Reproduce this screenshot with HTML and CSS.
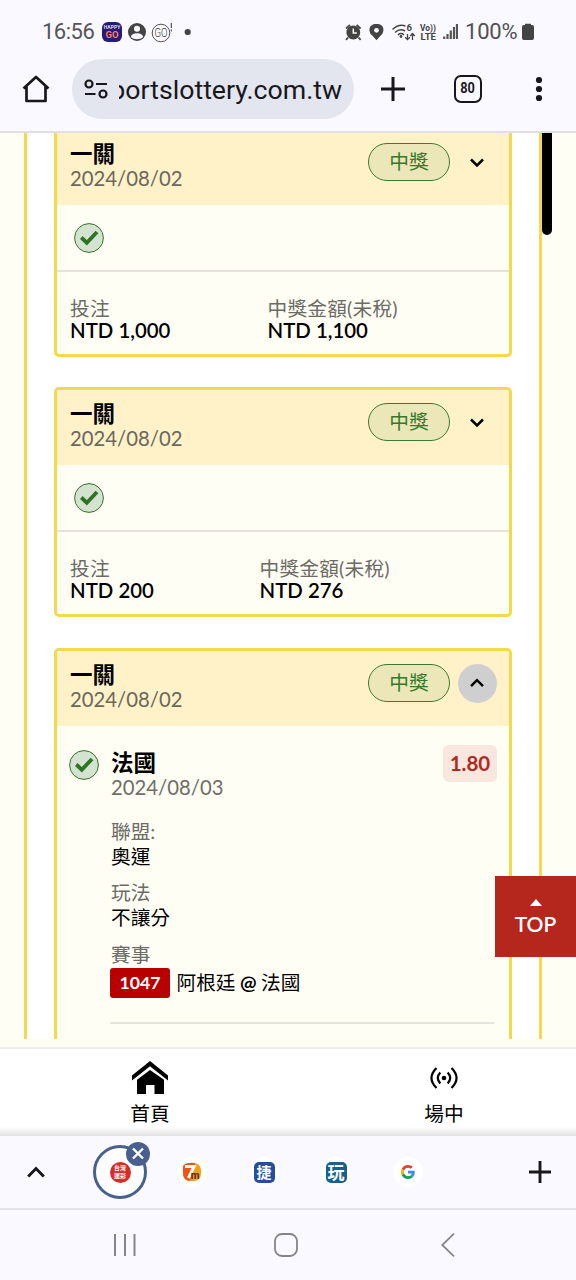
FILE: index.html
```html
<!DOCTYPE html>
<html lang="zh-Hant">
<head>
<meta charset="utf-8">
<title>投注紀錄</title>
<link rel="stylesheet" href="styles.css">
</head>
<body>
<svg class="defs" width="0" height="0">
  <symbol id="check" viewBox="0 0 30 30"><circle cx="15" cy="15" r="14.4" fill="#d4e3cf" stroke="#33722c" stroke-width="1"/><path d="M7.3 14.500l5.500 5.200 10.200-10.700" fill="none" stroke="#2f7424" stroke-width="3.800"/></symbol>
  <symbol id="down" viewBox="0 0 14 10"><path d="M1 1.500l6 6 6-6" fill="none" stroke="#000" stroke-width="2.500"/></symbol>
  <symbol id="up" viewBox="0 0 14 10"><path d="M1 8.200l6-6 6 6" fill="none" stroke="#000" stroke-width="2.500"/></symbol>
</svg>
<div class="phone">
  <header class="status">
    <span class="clock">16:56</span>
    <svg class="status-left" width="92" height="24" viewBox="0 0 92 24">
      <rect x="0" y="2" width="20" height="20" rx="6" fill="#2a1a78"/>
      <text x="10" y="8.600" class="happy">HAPPY</text><text x="10" y="18.200" class="go">GO</text>
      <circle cx="35" cy="12" r="9" fill="#444"/><circle cx="35" cy="8.800" r="3" fill="#fafaff"/><path d="M29 17c0-5 12-5 12 0-2 3-10 3-12 0z" fill="#fafaff"/>
      <circle cx="59" cy="13" r="8.800" fill="none" stroke="#555" stroke-width="1"/><text x="59" y="17.300" class="go-line" textLength="13" lengthAdjust="spacingAndGlyphs">GO</text>
      <path d="M69.300 3v5m0 1.500v2" stroke="#444" stroke-width="1.100"/>
      <circle cx="85.700" cy="12" r="3.100" fill="#444"/>
    </svg>
    <svg class="status-right" width="114" height="24" viewBox="344 20 114 24">
      <g fill="none" stroke="#444" stroke-width="1.800"><circle cx="353.300" cy="32.500" r="6" fill="#444"/><path d="M346 28.500l4-3.500M356.600 25l4 3.500M348 37.500l-2 2.300M358.600 37.500l2 2.300"/></g>
      <path d="M353.300 28.500v4.500h3.500" fill="none" stroke="#fafaff" stroke-width="1.500"/>
      <path d="M376.500 24c-8.800 0-8.200 8.500-4.200 11.600l4.200 4.600 4.200-4.600c4-3.100 4.600-11.600-4.200-11.600z" fill="#444"/><circle cx="376.500" cy="30.300" r="2.400" fill="#fafaff"/>
      <g fill="none" stroke="#444" stroke-width="1.500"><path d="M392.500 29.500q6.500-6 13-3.500M395 32.500q5-4.500 10-1.500M398 34.800q3-2.500 6 0"/><path d="M407.500 34v5.500m-2.300-2.200l2.300 2.300 2.300-2.300M412.500 40v-6.500m-2.300 2.500l2.300-2.500 2.300 2.500" stroke-width="1.300"/></g>
      <circle cx="401" cy="36.500" r="1.400" fill="#444"/><text x="406.500" y="31" class="tiny">6</text>
      <text x="420" y="31" class="tiny" textLength="16" lengthAdjust="spacingAndGlyphs">Vo))</text><text x="420.500" y="40.300" class="tiny" textLength="15.500" lengthAdjust="spacingAndGlyphs">LTE</text>
      <path d="M444.200 39v-2.500M447.500 39v-5M450.800 39v-8.500M454 39v-12M457 39V24" stroke="#555" stroke-width="2.200"/>
    </svg>
    <span class="percent">100%</span>
    <svg width="12" height="18" viewBox="0 0 12 18"><path d="M3 2V.8h6V2h1.500Q12 2 12 4v11q0 2-2 2H2q-2 0-2-2V4q0-2 1.500-2z" fill="#444"/></svg>
  </header>
  <div class="toolbar">
    <svg class="home" width="28" height="28" viewBox="0 0 28 28"><path d="M1.500 13.500L14 2l12.500 11.500M4.500 11.500V26h19V11.500" fill="none" stroke="#17171c" stroke-width="2.700" stroke-linejoin="round"/></svg>
    <div class="address">
      <svg width="24" height="20" viewBox="0 0 24 20"><g fill="none" stroke="#17171c" stroke-width="2.200"><circle cx="5" cy="5" r="3.500"/><path d="M12 5h11M1 15h10.500"/><circle cx="19" cy="15" r="3.500"/></g></svg>
      <div class="url"><span>portslottery.com.tw</span></div>
    </div>
    <svg class="plus" width="24" height="24" viewBox="0 0 24 24"><path d="M12 0v24M0 12h24" stroke="#17171c" stroke-width="3"/></svg>
    <span class="tabs"><span>80</span></span>
    <svg class="more" width="8" height="26" viewBox="0 0 8 26"><circle cx="4" cy="4" r="3.100"/><circle cx="4" cy="13" r="3.100"/><circle cx="4" cy="22" r="3.100"/></svg>
  </div>

  <main class="viewport">
    <div class="frame">
      <section class="card first">
        <div class="head"><div class="grow"><h2>一關</h2><p class="date">2024/08/02</p></div><span class="pill">中獎</span><span class="toggle"><svg width="14" height="10"><use href="#down"/></svg></span></div>
        <div class="result"><svg width="30" height="30"><use href="#check"/></svg></div>
        <div class="sums"><div class="stake"><p class="label">投注</p><p class="money">NTD 1,000</p></div><div><p class="label">中獎金額(未稅)</p><p class="money">NTD 1,100</p></div></div>
      </section>
      <section class="card second">
        <div class="head"><div class="grow"><h2>一關</h2><p class="date">2024/08/02</p></div><span class="pill">中獎</span><span class="toggle"><svg width="14" height="10"><use href="#down"/></svg></span></div>
        <div class="result"><svg width="30" height="30"><use href="#check"/></svg></div>
        <div class="sums"><div class="stake"><p class="label">投注</p><p class="money">NTD 200</p></div><div><p class="label">中獎金額(未稅)</p><p class="money">NTD 276</p></div></div>
      </section>
      <section class="card open">
        <div class="head"><div class="grow"><h2>一關</h2><p class="date">2024/08/02</p></div><span class="pill">中獎</span><span class="toggle active"><svg width="14" height="10"><use href="#up"/></svg></span></div>
        <div class="pick">
          <svg class="pick-check" width="30" height="30"><use href="#check"/></svg>
          <div class="detail">
            <div class="pick-head"><div class="grow"><h2>法國</h2><p class="date">2024/08/03</p></div><span class="odds">1.80</span></div>
            <div class="pair"><p class="label">聯盟:</p><p>奧運</p></div>
            <div class="pair"><p class="label">玩法</p><p>不讓分</p></div>
            <div class="pair"><p class="label">賽事</p><div class="match"><span class="code">1047</span><span class="teams">阿根廷 <b>@</b> 法國</span></div></div>
            <hr>
          </div>
        </div>
      </section>
    </div>
    <div class="scrollbar"></div>
    <div class="top"><svg width="12" height="7" viewBox="0 0 12 7"><path d="M0 7l6-7 6 7z" fill="#fff"/></svg><span>TOP</span></div>
  </main>

  <nav class="site-nav">
    <div class="nav-home"><svg width="36" height="33" viewBox="0 0 36 33"><path d="M0 14.500L18 0l18 14.500v5L18 5.300 0 19.500z"/><path d="M5 18.800L18 9l14 9.800V33h-9.500v-9h-8.500v9H5z"/></svg><span>首頁</span></div>
    <div class="nav-live"><svg width="28" height="24" viewBox="0 0 28 24"><circle cx="14" cy="12" r="2.300"/><g fill="none" stroke="#000" stroke-width="2.200"><path d="M10.300 6.500q-5 5.500 0 11M17.700 6.500q5 5.500 0 11M6.500 2q-10 10 0 20M21.500 2q10 10 0 20"/></g></svg><span>場中</span></div>
  </nav>

  <div class="strip">
    <svg class="strip-up" width="18" height="12" viewBox="0 0 18 12"><path d="M1.200 10.500L9 2.500l7.800 8" fill="none" stroke="#17171c" stroke-width="2.900"/></svg>
    <div class="tab current"><span class="fav lottery"><span>台灣</span><span>運彩</span></span><svg class="close" width="24" height="24" viewBox="0 0 24 24"><circle cx="12" cy="12" r="12" fill="#49608f"/><path d="M7 6.500l10 10m0-10L7 16.500" stroke="#fff" stroke-width="2.400"/></svg></div>
    <div class="tab"><svg width="20" height="20" viewBox="0 0 20 20"><rect x="1" y="1" width="18" height="18" rx="7" fill="#f5a01c"/><path d="M1 4q3-4 12-3L8 19q-7-1-7-8z" fill="#ee5418"/><path d="M3 4.500h9L6.500 16" fill="none" stroke="#fff" stroke-width="3"/><text x="13" y="16.500" class="seven-m">m</text></svg></div>
    <div class="tab"><span class="fav jie">捷</span></div>
    <div class="tab"><span class="fav wan">玩</span></div>
    <div class="tab"><svg width="14" height="14" viewBox="0 0 48 48"><path fill="#db4437" d="M24 9.500c3.500 0 6.700 1.200 9.200 3.600l6.900-6.900C35.900 2.400 30.500 0 24 0 14.600 0 6.500 5.400 2.600 13.200l8 6.200C12.400 13.700 17.700 9.500 24 9.500z"/><path fill="#4285f4" d="M47 24.500c0-1.600-.2-3.100-.4-4.500H24v9h12.900c-.6 3-2.300 5.500-4.800 7.200l7.700 6C44.400 38 47 31.800 47 24.500z"/><path fill="#f4b400" d="M10.500 28.600a14 14 0 010-9.200l-8-6.200a24 24 0 000 21.600z"/><path fill="#0f9d58" d="M24 48c6.500 0 11.900-2.100 15.900-5.800l-7.700-6c-2.200 1.500-4.900 2.300-8.200 2.300-6.300 0-11.600-4.200-13.500-9.900l-8 6.200C6.500 42.600 14.600 48 24 48z"/></svg></div>
    <svg class="strip-plus" width="22" height="22" viewBox="0 0 22 22"><path d="M11 0v22M0 11h22" stroke="#17171c" stroke-width="2.900"/></svg>
  </div>
  <footer class="system">
    <svg width="22" height="24" viewBox="0 0 22 24"><path d="M1 1v22M11 1v22M20.500 1v22" stroke="#858589" stroke-width="2"/></svg>
    <svg class="sys-home" width="24" height="24" viewBox="0 0 24 24"><rect x="1" y="1" width="22" height="22" rx="7" fill="none" stroke="#858589" stroke-width="1.800"/></svg>
    <svg width="14" height="24" viewBox="0 0 14 24"><path d="M13 .7L1.200 12 13 23.300" fill="none" stroke="#858589" stroke-width="1.800"/></svg>
  </footer>
</div>
</body>
</html>
```
FILE: styles.css
```css
* { box-sizing: border-box; }
body, h2, p { margin: 0; }
body { font-family: Lato, "Noto Sans CJK TC", sans-serif; color: #000; }
svg { display: block; flex: none; }
.defs { position: absolute; }
.phone { width: 576px; height: 1280px; overflow: hidden; display: flex; flex-direction: column; background: #faf9ff; }
.grow { flex: 1; }

.status { height: 60px; padding: 3px 0 0 42px; display: flex; align-items: center; font: 300 22px/24px Roboto, sans-serif; color: #333; white-space: nowrap; }
.clock { width: 60px; font-size: 22px; font-weight: 400; letter-spacing: -.5px; color: #555; }
.status-left { margin-right: 150px; }
.happy { font: 700 5px Roboto, sans-serif; fill: #ddd; text-anchor: middle; }
.go { font: 700 9.500px Roboto, sans-serif; fill: #f08560; text-anchor: middle; }
.go-line { font: 300 12px Roboto, sans-serif; fill: #444; text-anchor: middle; }
.tiny { font: 700 9.500px Roboto, sans-serif; fill: #444; }
.percent { width: 57px; margin-left: 7px; color: #505054; font-weight: 400; letter-spacing: -.2px; }

.toolbar { height: 73px; padding: 0 0 14px 22px; display: flex; align-items: center; border-bottom: 2px solid #e0dfe5; }
.address { width: 282px; height: 60px; margin-left: 22px; padding-left: 12px; border-radius: 30px; background: #e3e6ef; display: flex; align-items: center; }
.url { width: 223px; margin-left: 11px; padding-top: 2px; overflow: hidden; display: flex; justify-content: flex-end; font: 400 26.700px/34px Roboto, sans-serif; color: #17171c; }
.plus { margin-left: 27px; }
.tabs { width: 28px; height: 28px; margin-left: 49px; border: 2.500px solid #17171c; border-radius: 7px; display: flex; align-items: center; justify-content: center; font: 700 15px/1 Roboto, sans-serif; color: #17171c; }
.tabs span { transform: scaleX(.85); }
.more { margin-left: 53px; fill: #17171c; }

.viewport { position: relative; height: 914px; padding-bottom: 8px; overflow: hidden; display: flex; background: #fffef5; }
.frame { width: 518px; height: 906px; margin-left: 24px; padding: 0 27px; overflow: hidden; border: solid #f4d84e; border-width: 0 3px; background: #fff; }
.card { width: 458px; height: 230px; margin-bottom: 30px; border: 3px solid #f4d84e; border-radius: 5px; background: #fffef5; overflow: hidden; }
.card.first { margin-top: -6px; }
.card.second { margin-bottom: 31px; }
.card.open { height: 420px; }
.head { height: 75px; padding: 12px 12px 0 13px; display: flex; background: #fff2c9; }
h2 { font-size: 22.500px; line-height: 24px; font-weight: 700; }
.date { font-size: 20.300px; line-height: 24px; color: #6b675c; }
.open .detail .date { color: #6f6e69; }
.pill { width: 82px; height: 38px; margin-top: 1px; border: 1.300px solid #3c7a33; border-radius: 19px; background: #ebe7b8; color: #357a2b; display: flex; align-items: center; justify-content: center; font-size: 19.700px; line-height: 24px; }
.toggle { width: 39px; height: 39px; margin: 1px 0 0 8px; padding: 0 2px 1px 0; border-radius: 50%; display: flex; align-items: center; justify-content: center; }
.toggle:not(.active) { padding: 1px 2px 0 0; }
.toggle.active { background: #cfcfcf; }
.toggle.active svg { margin-top: -1px; }
.result { height: 67px; padding: 18px 0 0 17px; border-bottom: 2px solid #e5e2dc; }
.sums { padding: 26px 13px 0; display: flex; }
.first .stake { width: 197.500px; }
.second .stake { width: 189.500px; }
.label { color: #6c6b65; }
.sums p { font-size: 19.700px; line-height: 22px; }
.sums .label { letter-spacing: .2px; }
.sums .money { font-size: 20.400px; line-height: 21px; font-weight: 600; }
.pick { display: flex; padding: 19px 12px 0 12px; }
.pick-check { margin-top: 5px; }
.detail { flex: 1; padding-left: 12px; }
.pick-head { display: flex; height: 75px; }
.pick-head .grow { padding-top: 6px; }
.odds { width: 54px; height: 37px; border-radius: 6px; background: #f8e6df; color: #ae2b22; font-size: 20.500px; line-height: 37px; font-weight: 700; text-align: center; }
.pair { margin-bottom: 12.300px; font-size: 19.700px; line-height: 24.500px; }
.match { display: flex; align-items: center; height: 32px; }
.code { width: 60px; height: 30px; margin-left: -1px; border-radius: 3px; background: #b90000; color: #fff; font-size: 17.600px; line-height: 30px; font-weight: 700; text-align: center; }
.teams { margin-left: 6.500px; white-space: nowrap; word-spacing: -.6px; }
.teams b { font-weight: 700; }
hr { width: 384px; height: 2px; margin: 23px 0 0 -1px; border: 0; background: #e5e3dd; }
.scrollbar { width: 10px; height: 102px; background: #000; border-radius: 0 0 5px 5px; }
.top { position: absolute; right: 0; top: 743px; width: 81px; height: 81px; padding-top: 23px; background: #b5271d; color: #fff; display: flex; flex-direction: column; align-items: center; font-size: 21px; line-height: 36px; font-weight: 600; }

.site-nav { height: 89px; border-top: 2px solid #eeede9; display: grid; grid-template-columns: 300px 288px; background: linear-gradient(#fff 0 78px, #ddd 88px); font-size: 19.700px; line-height: 24px; }
.nav-home, .nav-live { display: flex; flex-direction: column; align-items: center; }
.nav-home { padding-top: 12px; }
.nav-home span { margin-top: 8px; }
.nav-live { padding-top: 17px; }
.nav-live span { margin-top: 12px; }

.strip { height: 74px; border-bottom: 2px solid #e2e1e7; display: flex; align-items: center; }
.strip-up { margin: 0 30px 0 27px; }
.tab { position: relative; width: 30px; height: 30px; margin: 0 21px; border-radius: 50%; background: #fff; display: flex; align-items: center; justify-content: center; flex: none; }
.tab.current { width: 54px; height: 54px; margin: 0 9px 0 18px; border: 3px solid #49608f; }
.close { position: absolute; right: -6px; top: -6px; }
.fav { width: 21px; height: 21px; border-radius: 5px; color: #fff; font: 700 15px/20px "Noto Sans CJK TC", sans-serif; text-align: center; }
.lottery { border-radius: 50%; background: #d92a2a; font-size: 6px; line-height: 8.500px; padding-top: 2px; display: flex; flex-direction: column; }
.jie { background: #264d9e; }
.wan { background: #17618e; font-size: 17px; }
.seven-m { font: 700 10px Roboto, sans-serif; fill: #502719; text-anchor: middle; }
.strip-plus { margin-left: 85px; }

.system { flex: 1; padding: 0 121px 0 114px; display: flex; align-items: center; justify-content: space-between; }
.sys-home { margin-right: 6px; }
```
